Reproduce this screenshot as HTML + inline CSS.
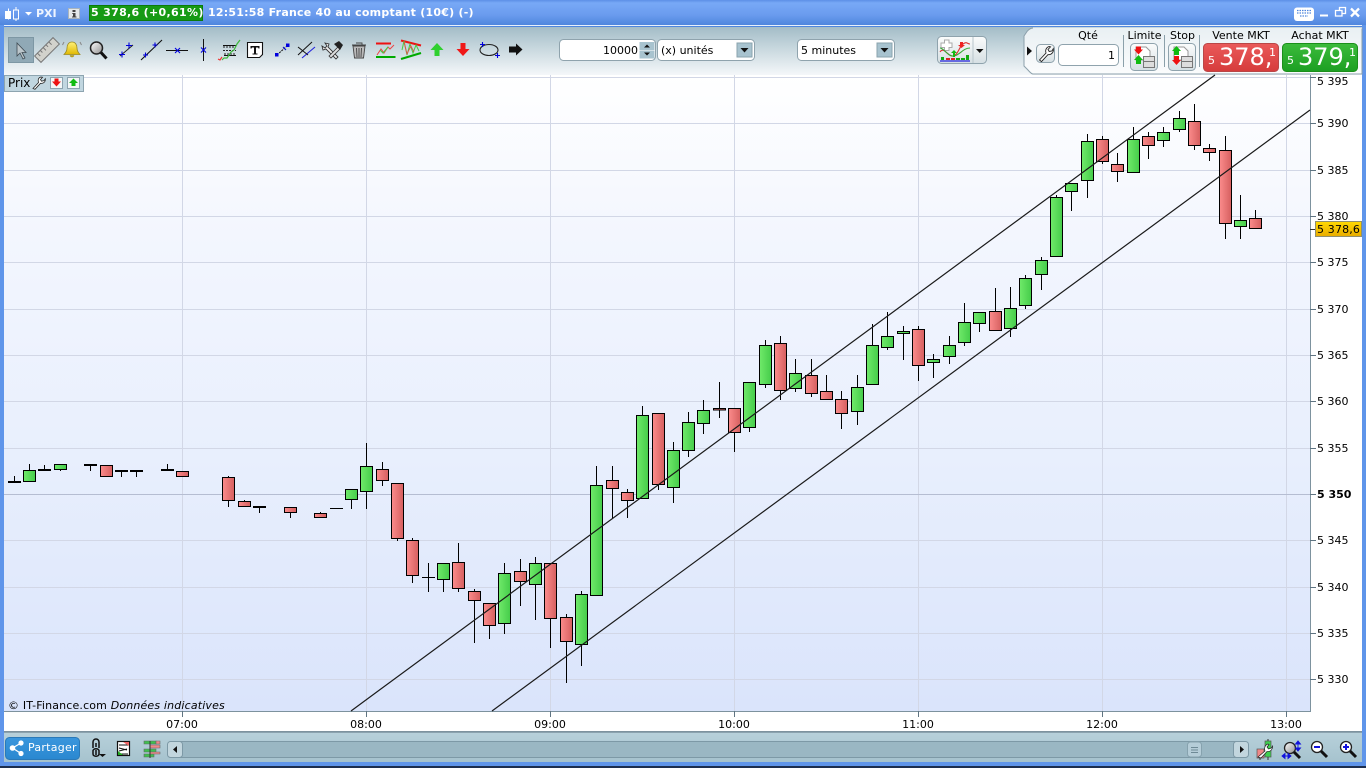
<!DOCTYPE html>
<html><head><meta charset="utf-8"><title>PXI</title>
<style>
html,body{margin:0;padding:0;width:1366px;height:768px;overflow:hidden;background:#5f95ea;font-family:"DejaVu Sans",sans-serif;font-size:11px;color:#000}
.a{position:absolute;white-space:nowrap}
#title{left:0;top:0;width:1366px;height:25px;background:linear-gradient(#5c8fe6,#78a9f6 12%,#6a9bee 60%,#4f86dd)}
#tbar{left:4px;top:27px;width:1358px;height:48px;background:linear-gradient(#a3bcc7,#c4d5dc 40%,#f4f7f9)}
#chartbg{left:4px;top:75px;width:1358px;height:657px;background:#fff}
#plot{left:4px;top:75px;width:1306px;height:636px;background:linear-gradient(#fff,#f3f6fe 25%,#e8effd 60%,#dae4fb)}
#bbar{left:4px;top:732px;width:1358px;height:30px;background:linear-gradient(#b7d0da,#a6c3ce);border-top:1px solid #8ba2ae;box-sizing:border-box}
#line{left:0;top:766px;width:1366px;height:2px;background:#1d2f4f}
.ax{left:1317px;color:#000;line-height:14px}
.tm{top:718px;width:40px;text-align:center;line-height:14px}
.lab{line-height:14px;text-align:center}
.px{color:#fff;line-height:28px}
</style></head><body>
<div class="a" id="title"></div>
<div class="a" style="left:0;top:25px;width:1366px;height:1px;background:#e8f0fc"></div>
<div class="a" style="left:0;top:26px;width:1366px;height:1px;background:#4f86dd"></div>
<div class="a" style="left:0;top:25px;width:4px;height:743px;background:#5f95ea"></div>
<div class="a" style="left:1362px;top:25px;width:4px;height:743px;background:#5f95ea"></div>
<div class="a" id="tbar"></div>
<div class="a" id="chartbg"></div>
<div class="a" id="plot"></div>
<div class="a" id="bbar"></div>
<div class="a" style="left:0;top:762px;width:1366px;height:4px;background:#5f95ea"></div>
<div class="a" id="line"></div>

<div class="a" style="left:36px;top:6px;color:#eef4ff;line-height:15px;font-size:11px;font-weight:bold">PXI</div>
<div class="a" style="left:89px;top:5px;width:114px;height:16px;background:#159a14;border:1px solid #0b7a0b;box-sizing:border-box"></div>
<div class="a" style="left:91px;top:5px;color:#fff;line-height:16px;font-weight:bold;font-size:11px;letter-spacing:.32px">5 378,6 (+0,61%)</div>
<div class="a" style="left:208px;top:5px;color:#fff;line-height:16px;font-weight:bold;font-size:11px;letter-spacing:.23px">12:51:58 France 40 au comptant (10€) (-)</div>

<svg class="a" style="left:0;top:0" width="1366" height="768" viewBox="0 0 1366 768" xmlns="http://www.w3.org/2000/svg">
<defs>
<linearGradient id="g"><stop offset="0" stop-color="#70ea6a"/><stop offset="1" stop-color="#45cc4a"/></linearGradient>
<linearGradient id="r"><stop offset="0" stop-color="#fb8c8c"/><stop offset="1" stop-color="#d65f5f"/></linearGradient>
<linearGradient id="bell" x2="0" y2="1"><stop offset="0" stop-color="#fff27a"/><stop offset="1" stop-color="#e0b800"/></linearGradient>
<linearGradient id="tag" x2="0" y2="1"><stop offset="0" stop-color="#ffd900"/><stop offset="1" stop-color="#e9ac00"/></linearGradient>
<linearGradient id="lens" x1="0" y1="0" x2="1" y2="1"><stop offset="0" stop-color="#fff"/><stop offset="1" stop-color="#8f8f8f"/></linearGradient>
<linearGradient id="btn" x2="0" y2="1"><stop offset="0" stop-color="#fbfcfc"/><stop offset="1" stop-color="#d5dfe3"/></linearGradient>
<linearGradient id="ven" x2="0" y2="1"><stop offset="0" stop-color="#ea5a5a"/><stop offset="1" stop-color="#d63c3c"/></linearGradient>
<linearGradient id="ach" x2="0" y2="1"><stop offset="0" stop-color="#3cbb3c"/><stop offset="1" stop-color="#1c9f22"/></linearGradient>
<linearGradient id="pan" x2="0" y2="1"><stop offset="0" stop-color="#e9f0f3"/><stop offset="1" stop-color="#fbfcfd"/></linearGradient>
<linearGradient id="share" x2="0" y2="1"><stop offset="0" stop-color="#3a96dd"/><stop offset="1" stop-color="#2a88d0"/></linearGradient>
</defs>

<!-- grid -->
<path d="M4 77.5H1310M4 123.5H1310M4 170.5H1310M4 216.5H1310M4 262.5H1310M4 309.5H1310M4 355.5H1310M4 401.5H1310M4 448.5H1310M4 540.5H1310M4 587.5H1310M4 633.5H1310M4 679.5H1310M182.5 75V711M366.5 75V711M550.5 75V711M734.5 75V711M918.5 75V711M1102.5 75V711M1286.5 75V711" stroke="#d2d7e6" fill="none"/>
<path d="M4 494.5H1310" stroke="#b5bdd2" fill="none"/>
<path d="M1310.5 75V712M4 711.5H1311M4 731.5H1362" stroke="#7d929e" fill="none"/>
<path d="M1310 77.5h6M1310 123.5h6M1310 170.5h6M1310 216.5h6M1310 262.5h6M1310 309.5h6M1310 355.5h6M1310 401.5h6M1310 448.5h6M1310 494.5h6M1310 540.5h6M1310 587.5h6M1310 633.5h6M1310 679.5h6M182.5 711v6M366.5 711v6M550.5 711v6M734.5 711v6M918.5 711v6M1102.5 711v6M1286.5 711v6" stroke="#5f7482" fill="none"/>

<!-- wicks -->
<path stroke="#000" fill="none" d="M14.5 476V482M29.5 464V470M44.5 465V470M60.5 469V471M90.5 465V471M121.5 471V477M136.5 471V477M167.5 464V470M228.5 476V507M244.5 500V502M259.5 506V513M290.5 512V518M320.5 512V514M351.5 499V509M366.5 443V509M382.5 462V486M397.5 538V541M412.5 538V583M428.5 563V592M443.5 579V592M458.5 543V592M474.5 589V643M489.5 625V639M504.5 563V634M520.5 559V606M535.5 557V620M550.5 618V648M566.5 614V683M581.5 591V666M596.5 466V486M612.5 466V518M627.5 489V518M642.5 406V416M658.5 484V490M673.5 442V503M688.5 412V457M703.5 400V434M719.5 382V418M734.5 432V452M749.5 427V432M765.5 340V388M780.5 336V400M795.5 359V392M811.5 359V397M826.5 375V392M841.5 391V429M857.5 375V425M872.5 324V346M887.5 312V350M903.5 326V360M918.5 326V381M933.5 354V378M949.5 336V364M964.5 303V346M979.5 323V332M995.5 288V312M1010.5 287V337M1025.5 275V309M1041.5 257V290M1056.5 195V198M1071.5 191V211M1087.5 134V198M1102.5 136V164M1117.5 153V182M1133.5 127V140M1148.5 132V159M1163.5 127V147M1179.5 111V132M1194.5 104V150M1209.5 144V161M1225.5 136V239M1240.5 195V239M1255.5 210V219"/>
<!-- dojis -->
<path stroke="#000" stroke-width="2" fill="none" d="M8 482H21M38 470H51M84 465H97M115 471H128M130 471H143M161 470H174M253 507H266"/>
<path stroke="#000" fill="none" d="M330 508.500H343M422 577.500H435"/>
<!-- red -->
<g fill="url(#r)" stroke="#000">
<rect x="100.500" y="465.500" width="12" height="11"/><rect x="176.500" y="471.500" width="12" height="5"/><rect x="222.500" y="477.500" width="12" height="23"/><rect x="238.500" y="501.500" width="12" height="5"/><rect x="284.500" y="507.500" width="12" height="5"/><rect x="314.500" y="513.500" width="12" height="4"/><rect x="376.500" y="469.500" width="12" height="11"/><rect x="391.500" y="483.500" width="12" height="55"/><rect x="406.500" y="540.500" width="12" height="35"/><rect x="452.500" y="562.500" width="12" height="26"/><rect x="468.500" y="591.500" width="12" height="9"/><rect x="483.500" y="603.500" width="12" height="22"/><rect x="514.500" y="571.500" width="12" height="10"/><rect x="544.500" y="563.500" width="12" height="55"/><rect x="560.500" y="617.500" width="12" height="24"/><rect x="606.500" y="480.500" width="12" height="8"/><rect x="621.500" y="492.500" width="12" height="8"/><rect x="652.500" y="413.500" width="12" height="71"/><rect x="713.500" y="408.500" width="12" height="1.500"/><rect x="728.500" y="408.500" width="12" height="24"/><rect x="774.500" y="343.500" width="12" height="47"/><rect x="805.500" y="375.500" width="12" height="18"/><rect x="820.500" y="391.500" width="12" height="8"/><rect x="835.500" y="399.500" width="12" height="14"/><rect x="912.500" y="329.500" width="12" height="36"/><rect x="989.500" y="311.500" width="12" height="19"/><rect x="1096.500" y="139.500" width="12" height="22"/><rect x="1111.500" y="164.500" width="12" height="7"/><rect x="1142.500" y="136.500" width="12" height="9"/><rect x="1188.500" y="121.500" width="12" height="24"/><rect x="1203.500" y="148.500" width="12" height="4"/><rect x="1219.500" y="150.500" width="12" height="73"/><rect x="1249.500" y="218.500" width="12" height="10"/>
</g>
<!-- green -->
<g fill="url(#g)" stroke="#000">
<rect x="23.500" y="470.500" width="12" height="11"/><rect x="54.500" y="464.500" width="12" height="5"/><rect x="345.500" y="489.500" width="12" height="10"/><rect x="360.500" y="466.500" width="12" height="25"/><rect x="437.500" y="563.500" width="12" height="16"/><rect x="498.500" y="573.500" width="12" height="50"/><rect x="529.500" y="563.500" width="12" height="21"/><rect x="575.500" y="594.500" width="12" height="50"/><rect x="590.500" y="485.500" width="12" height="110"/><rect x="636.500" y="415.500" width="12" height="83"/><rect x="667.500" y="450.500" width="12" height="37"/><rect x="682.500" y="422.500" width="12" height="28"/><rect x="697.500" y="410.500" width="12" height="13"/><rect x="743.500" y="382.500" width="12" height="45"/><rect x="759.500" y="345.500" width="12" height="39"/><rect x="789.500" y="373.500" width="12" height="15"/><rect x="851.500" y="387.500" width="12" height="24"/><rect x="866.500" y="345.500" width="12" height="39"/><rect x="881.500" y="336.500" width="12" height="11"/><rect x="897.500" y="331.500" width="12" height="2"/><rect x="927.500" y="359.500" width="12" height="3"/><rect x="943.500" y="345.500" width="12" height="11"/><rect x="958.500" y="322.500" width="12" height="20"/><rect x="973.500" y="312.500" width="12" height="11"/><rect x="1004.500" y="308.500" width="12" height="20"/><rect x="1019.500" y="278.500" width="12" height="27"/><rect x="1035.500" y="260.500" width="12" height="14"/><rect x="1050.500" y="197.500" width="12" height="59"/><rect x="1065.500" y="183.500" width="12" height="8"/><rect x="1081.500" y="141.500" width="12" height="39"/><rect x="1127.500" y="139.500" width="12" height="33"/><rect x="1157.500" y="132.500" width="12" height="8"/><rect x="1173.500" y="118.500" width="12" height="11"/><rect x="1234.500" y="220.500" width="12" height="6"/>
</g>
<!-- trend lines -->
<path d="M351 711L1215 75M492 711L1310 110" stroke="#1a1a1a" stroke-width="1.200" fill="none"/>

<!-- price tag -->
<path d="M1310 229.500h5" stroke="#333"/>
<rect x="1315.500" y="221.500" width="46" height="15" fill="url(#tag)" stroke="#8f8f70"/>

<!-- title bar icons -->
<g fill="#fff"><rect x="8" y="8.500" width="1" height="11"/><rect x="5" y="11" width="6" height="8"/><path d="M16 7v3M16 19v2" stroke="#fff" fill="none"/><rect x="13.500" y="10" width="5" height="9" fill="none" stroke="#fff"/><path d="M25 12h7l-3.500 3.500z"/></g>
<rect x="68.500" y="8.500" width="11" height="10" fill="#e4e8ea" stroke="#a9b4bd"/>
<path d="M72.500 10h3v2h-3zM72 13h3.500v3.500h1v1h-4.500v-1h1v-2.500h-.500z" fill="#444"/>
<rect x="1294" y="7.500" width="20" height="13.500" rx="3" fill="#fff"/>
<path d="M1297 10.500h14M1297 13h14M1300 16h8" stroke="#4f86dd" stroke-width="1.300" stroke-dasharray="1.500 1" fill="none"/>
<path d="M1320 15.500h8" stroke="#fff" stroke-width="2"/>
<path d="M1335.500 10.500h4v-3h6v6h-3M1335.500 10.500h6.500v5.500h-6.500z" fill="none" stroke="#fff" stroke-width="1.300"/>
<path d="M1351 8.500l8 8M1359 8.500l-8 8" stroke="#fff" stroke-width="2.300"/>

<!-- tools -->
<rect x="8.500" y="37.500" width="25" height="25" fill="#90a9b6" stroke="#7d97a4"/>
<path d="M17 43v13l3-3 3 6 2-1-3-5.500h4z" fill="#bcc6cb" stroke="#3e4a52" stroke-width=".8"/>
<!-- ruler -->
<g transform="translate(47 50) rotate(-45)"><rect x="-13" y="-4.500" width="26" height="9" fill="#d2d2cc" stroke="#777"/><path d="M-9-4.500v4M-5-4.500v3M-1-4.500v4M3-4.500v3M7-4.500v4" stroke="#777"/></g>
<!-- bell -->
<path d="M72 42c-3.500 0-5 3-5 6 0 3-1.500 5-3 6.500h16c-1.500-1.500-3-3.500-3-6.500 0-3-1.500-6-5-6z" fill="url(#bell)" stroke="#9a8a20" stroke-width=".8"/><path d="M70 55.500h4c0 2-4 2-4 0z" fill="#c9a300" stroke="#9a8a20" stroke-width=".5"/><path d="M64 42l-1.500 3M80 42l1.500 3" stroke="#888"/>
<!-- magnifier -->
<circle cx="96.500" cy="48" r="6" fill="url(#lens)" stroke="#222" stroke-width="1.500"/><path d="M101 52.500l5.500 6" stroke="#111" stroke-width="3"/>
<!-- lines -->
<path d="M120 56l13-11" stroke="#222"/><path d="M119 54.500h6M122 51.500v6M126 45.500h6M129 42.500v6" stroke="#00d" stroke-width="1.100"/>
<path d="M141 60l21-20" stroke="#111" stroke-width="1.100"/><path d="M143 55h5M145.500 52.500v5M152.500 45h5M155 42.500v5" stroke="#00d" stroke-width="1.100"/>
<path d="M166 50.500h22" stroke="#111"/><path d="M175 48l5 5M180 48l-5 5" stroke="#00d" stroke-width="1.100"/>
<path d="M203.500 39v22" stroke="#111"/><path d="M201 47.500l5 5M206 47.500l-5 5" stroke="#00d" stroke-width="1.100"/>
<!-- fib -->
<path d="M223 47h13M223 50.500h13M224 54h12" stroke="#222" stroke-dasharray="2 1"/><path d="M223 45.500h13M224 55.500h12" stroke="#111"/><path d="M222 60l2-2 3 0 4-6 3-2 3-6 3-4" fill="none" stroke="#3cb83c" stroke-width="1.200"/><path d="M218 59l2 1 2-3" fill="none" stroke="#e33" stroke-width="1.200"/>
<!-- T -->
<path d="M247.500 42.500h15v12l-3 3h-12z" fill="#fff" stroke="#111" stroke-width="1.100"/><path d="M250.500 46h9v2.500h-1l-.5-1h-2v6h1.500v1h-5v-1h1.500v-6h-2l-.5 1h-1z" fill="#111"/>
<!-- blue seg -->
<path d="M277 55l11-10" stroke="#111" stroke-dasharray="2 1"/><rect x="275" y="53" width="3.500" height="3.500" fill="#00d"/><rect x="286" y="43.500" width="3.500" height="3.500" fill="#00d"/>
<path d="M283 47l3 3" stroke="#00d"/>
<path d="M298 55l14-13" stroke="#111"/><path d="M302 58l13-11" stroke="#22d" stroke-width="1.100"/><path d="M298 47l10 8" stroke="#111"/>
<!-- tools wrench hammer -->
<path d="M325 43l4 1-1 3 10 10-2 2-10-10-3 1-1-4 3 2 2-2z" fill="#eee" stroke="#333" stroke-width=".9"/><path d="M329 56l9-9 2 2-9 9z" fill="#ddd" stroke="#333" stroke-width=".8"/><path d="M334 44l5-3 4 4-3 5z" fill="#222"/>
<!-- trash -->
<path d="M353 46h12l-1.500 12h-9z" fill="#b9b9b9" stroke="#444" stroke-width=".9"/><path d="M352 45h14M356 43h6v2M356.500 48l.5 9M359 48v9M361.500 48l-.5 9" stroke="#444" fill="none" stroke-width=".9"/>
<!-- channel -->
<path d="M376 43.500h15" stroke="#e11" stroke-width="2"/><path d="M376 57h19.500" stroke="#0a0" stroke-width="2"/><path d="M377 55l4-6 3 4 4-6 2 2 4-4" stroke="#e44" fill="none"/><path d="M380 50l3 3 5-6" stroke="#4c4" fill="none"/>
<path d="M401 40.500l20 5" stroke="#e11" stroke-width="2"/><path d="M401 59l20-6" stroke="#0a0" stroke-width="2.200"/><path d="M402 50l2-9 3 14 3-11 3 9 3-8 3 6" stroke="#4c4" fill="none"/><path d="M404 42l3 12 4-8 3 6" stroke="#e44" fill="none" stroke-width=".8"/>
<!-- arrows -->
<path d="M437 43l6.500 7h-4v6h-5v-6h-4z" fill="#2fd02f"/>
<path d="M463 56l6.500-7h-4v-6h-5v6h-4z" fill="#f01818"/>
<!-- ellipse -->
<ellipse cx="489" cy="50" rx="9" ry="5.500" fill="none" stroke="#222" stroke-width="1.100"/><path d="M480 44.500h5M482.500 42v5M495 55.500h5M497.500 53v5" stroke="#00d" stroke-width="1.100"/>
<path d="M509 46.500h7v-3l6.500 6-6.500 6v-3h-7z" fill="#111"/>

<!-- quantity -->
<rect x="559.500" y="39.500" width="96" height="21" rx="4" fill="#fff" stroke="#8fa3ad"/>
<rect x="639.500" y="42" width="15" height="8" fill="#a8c3cf"/><rect x="639.500" y="50.500" width="15" height="8" fill="#a8c3cf"/>
<path d="M644 47.500l3-3 3 3zM644 52.500l3 3 3-3z" fill="#111"/>
<rect x="657.500" y="39.500" width="97" height="21" rx="4" fill="#fff" stroke="#8fa3ad"/>
<rect x="737" y="43" width="15" height="14" fill="#a8c3cf" stroke="#8aa3ae"/><path d="M740.500 48h8l-4 4.500z" fill="#111"/>
<rect x="797.500" y="39.500" width="97" height="21" rx="4" fill="#fff" stroke="#8fa3ad"/>
<rect x="877" y="43" width="15" height="14" fill="#a8c3cf" stroke="#8aa3ae"/><path d="M880.500 48h8l-4 4.500z" fill="#111"/>

<!-- indicator button -->
<rect x="937.500" y="36.500" width="49" height="27" rx="4" fill="url(#btn)" stroke="#8fa3ad"/><path d="M973 37v26" stroke="#b8c5cb"/>
<path d="M976 49h7.500l-3.750 4z" fill="#111"/>
<path d="M941 43h3.500v-3h4.500v3h3v4.500h-3v3h-4.500v-3h-3.500z" fill="#fff" stroke="#aaa"/>
<path d="M940 52c4-6 8 5 13 4s6-9 10-12 4 0 7 0" fill="none" stroke="#d33" stroke-width="1.100"/><path d="M940 48c4 0 8 9 14 8s9-8 16-8" fill="none" stroke="#3a3" stroke-width="1.100"/>
<path d="M951 53l3-3 3 3h-2v4h-2v-4z" fill="#1b1"/><path d="M960 42h3v3h2l-3.500 3-3.500-3h2z" fill="#e22"/>
<path d="M941 57h3v3h-3zM956 58h4v2h-4zM961 58h4v2h-4zM966 55h3v5h-3z" fill="#1a1"/><path d="M946 58h4v2h-4zM951 58h4v2h-4z" fill="#d22"/><path d="M940 61h30" stroke="#22d" stroke-width="1.200"/>

<!-- right order panel -->
<path d="M1362 28H1033c-3 0-6 3-7 5l-2 3v30l3 3c2 2 4 5 6 5h329z" fill="url(#pan)" stroke="#8ca0ab"/>
<path d="M1362 28H1033" stroke="#e9f0f3"/>
<path d="M1027 46.500l5 4.500-5 4.500z" fill="#111"/>
<rect x="1036.500" y="44.500" width="18" height="18" rx="4" fill="url(#btn)" stroke="#8fa3ad"/>
<path id="wr" d="M1039.500 60l6.500-7c-1-2.500 0-5.500 3-6.500l1.500.4-2.500 2.600 1.200 2 2.800-.5 1.300-2.400c.7 3.500-1.800 6.500-5.300 6l-6.500 7z" fill="#fff" stroke="#222" stroke-width=".9"/>
<rect x="1058.500" y="44.500" width="60" height="21" rx="4" fill="#fff" stroke="#8fa3ad"/>
<path d="M1123.500 35v32M1164.500 35v32M1199.500 35v32" stroke="#8ba0aa"/>
<rect x="1130.500" y="43.500" width="27" height="27" rx="4" fill="url(#btn)" stroke="#8fa3ad"/>
<rect x="1168.500" y="43.500" width="27" height="27" rx="4" fill="url(#btn)" stroke="#8fa3ad"/>
<path d="M1136 47h10l4 4v9h-14z" fill="#fff" stroke="#999"/><path d="M1174 47h10l4 4v9h-14z" fill="#fff" stroke="#999"/>
<rect x="1143.500" y="56.500" width="11" height="11" fill="#ddd" stroke="#777"/><path d="M1143.500 61.500h11" stroke="#777"/>
<rect x="1181.500" y="56.500" width="11" height="11" fill="#ddd" stroke="#777"/><path d="M1181.500 61.500h11" stroke="#777"/>
<path d="M1136 46.500h5v3h2l-4.500 5-4.500-5h2z" fill="#e11"/><path d="M1138.500 55l4.500 5h-2v4h-5v-4h-2z" fill="#1b1"/>
<path d="M1176.500 46l4.500 5h-2v4h-5v-4h-2z" fill="#1b1"/><path d="M1174 56h5v4h2l-4.500 5-4.500-5h2z" fill="#e11"/>
<rect x="1203.500" y="43.500" width="75" height="28" rx="4" fill="url(#ven)" stroke="#b94747"/>
<rect x="1282.500" y="43.500" width="75" height="28" rx="4" fill="url(#ach)" stroke="#1a8f1a"/>

<!-- prix tab -->
<rect x="4.500" y="75.500" width="79" height="16" fill="#c1d6e0" stroke="#8da4b0"/>
<path d="M33 88.500l5.500-6c-1-2.500 0-5 2.500-5.500l1.500.3-2 2.200 1 1.700 2.500-.5 1.300-1.900c.3 3-1.800 5-4.800 4.500l-5.500 6z" fill="#fff" stroke="#222" stroke-width=".8"/>
<rect x="50.500" y="77.500" width="12" height="11" fill="#f3f6f7" stroke="#8da4b0"/><path d="M54.500 78.500h4v3h2.500l-4.500 5-4.500-5h2.500z" fill="#e11"/>
<rect x="67.500" y="77.500" width="12" height="11" fill="#f3f6f7" stroke="#8da4b0"/><path d="M73.500 78.500l4.500 4.500h-2.500v3h-4v-3h-2.500z" fill="#1b1"/>

<!-- bottom bar -->
<rect x="5.500" y="737.500" width="74" height="22" rx="4" fill="url(#share)" stroke="#2a79b8"/>
<circle cx="12.500" cy="748" r="2.800" fill="#fff"/><circle cx="21" cy="743" r="2.600" fill="#fff"/><circle cx="21" cy="753.500" r="2.600" fill="#fff"/><path d="M12.500 748l8.500-5M12.500 748l8.500 5.500" stroke="#fff" stroke-width="1.200"/>
<path d="M93 748v-6a2.500 2.500 0 0 1 6 0v6M96 743v4M93 751c0-3 6-3 6 0v3c0 3-6 3-6 0zM96 750v5" fill="none" stroke="#111" stroke-width="1.500"/><path d="M99 754h7l-3.500 3z" fill="#111"/>
<rect x="117.500" y="741.500" width="12" height="14" fill="#fff" stroke="#111" stroke-width="1.200"/><path d="M119 745h9M119 748l8 2M119 751l8-2M119 754h9" stroke="#111"/><path d="M123 742h6v4z" fill="#e66"/><path d="M118 755v-4l5 4z" fill="#2a2"/>
<path d="M144 741h12v3h-12zM144 749h12v3h-12zM144 754h10v3h-10z" fill="#3fbf4f" stroke="#666" stroke-width=".6"/><path d="M150 745h10v3h-10zM150 752h10v2h-10zM156 741h4v3h-4z" fill="#e88" stroke="#666" stroke-width=".6"/><path d="M150 741v17" stroke="#333"/>
<rect x="167.500" y="741.500" width="1080" height="16" rx="4" fill="#9ab7c3" stroke="#7d99a6"/>
<rect x="167.500" y="741.500" width="15" height="16" rx="3" fill="#c2d6de" stroke="#7d99a6"/><path d="M177 746v7l-4-3.500z" fill="#111"/>
<rect x="1187.500" y="742" width="14" height="15" rx="3" fill="#b5cdd8" stroke="#86a2ae"/><path d="M1191 747.500h7M1191 750h7M1191 752.500h7" stroke="#6e8a96"/>
<rect x="1233.500" y="741.500" width="15" height="16" rx="3" fill="#c2d6de" stroke="#7d99a6"/><path d="M1240 746v7l4-3.500z" fill="#111"/>
<rect x="1257" y="749" width="7" height="9" fill="#e88" stroke="#555" stroke-width=".7"/><rect x="1265" y="741" width="6" height="16" fill="#3fcf4f" stroke="#555" stroke-width=".7"/><path d="M1260 760v-2M1268 741v-2M1268 757v3" stroke="#333"/>
<path d="M1258 757l7-6c-1-3 0-6 3-7l1 .5-2 2.500 1.500 2 3-1 1-2c.5 3-2 6-5.500 5.500l-6 6.500z" fill="#fff" stroke="#222" stroke-width=".7"/>
<circle cx="1290" cy="748" r="5.500" fill="url(#lens)" stroke="#222" stroke-width="1.300"/><path d="M1294 752l6 6" stroke="#111" stroke-width="3"/>
<path d="M1298 741v10M1295.500 744l2.500-3 2.500 3zM1295.500 748l2.500 3 2.500-3zM1282 756h9M1285 753.500l-3 2.500 3 2.500zM1288 753.500l3 2.500-3 2.500z" fill="#11d" stroke="#11d" stroke-width=".9"/>
<circle cx="1317" cy="747" r="5.500" fill="#fff" stroke="#222" stroke-width="1.300"/><path d="M1314 747h6" stroke="#11d" stroke-width="2"/><path d="M1321 751l6 6" stroke="#111" stroke-width="3"/>
<circle cx="1346" cy="747" r="5.500" fill="#fff" stroke="#222" stroke-width="1.300"/><path d="M1343 747h6M1346 744v6" stroke="#11d" stroke-width="2"/><path d="M1350 751l6 6" stroke="#111" stroke-width="3"/>
</svg>

<div class="a" style="left:8px;top:76px;line-height:14px;font-size:12px">Prix</div>
<div class="a" style="left:560px;top:44px;width:78px;text-align:right;line-height:14px">10000</div>
<div class="a" style="left:661px;top:44px;line-height:14px">(x) unités</div>
<div class="a" style="left:801px;top:44px;line-height:14px">5 minutes</div>
<div class="a lab" style="left:1058px;top:29px;width:60px">Qté</div>
<div class="a" style="left:1059px;top:49px;width:56px;text-align:right;line-height:14px">1</div>
<div class="a lab" style="left:1124px;top:29px;width:41px">Limite</div>
<div class="a lab" style="left:1165px;top:29px;width:35px">Stop</div>
<div class="a lab" style="left:1203px;top:29px;width:76px">Vente MKT</div>
<div class="a lab" style="left:1282px;top:29px;width:76px">Achat MKT</div>
<div class="a px" style="left:1208px;top:47px;font-size:11px">5</div>
<div class="a px" style="left:1219px;top:43px;font-size:24px">378,</div>
<div class="a px" style="left:1269px;top:39px;font-size:11px">1</div>
<div class="a px" style="left:1287px;top:47px;font-size:11px">5</div>
<div class="a px" style="left:1298px;top:43px;font-size:24px">379,</div>
<div class="a px" style="left:1349px;top:39px;font-size:11px">1</div>

<div class="a ax" style="top:75px">5 395</div>
<div class="a ax" style="top:117px">5 390</div>
<div class="a ax" style="top:164px">5 385</div>
<div class="a ax" style="top:210px">5 380</div>
<div class="a ax" style="top:256px">5 375</div>
<div class="a ax" style="top:303px">5 370</div>
<div class="a ax" style="top:349px">5 365</div>
<div class="a ax" style="top:395px">5 360</div>
<div class="a ax" style="top:442px">5 355</div>
<div class="a ax" style="top:488px;font-weight:bold">5 350</div>
<div class="a ax" style="top:534px">5 345</div>
<div class="a ax" style="top:581px">5 340</div>
<div class="a ax" style="top:627px">5 335</div>
<div class="a ax" style="top:673px">5 330</div>
<div class="a ax" style="top:223px;letter-spacing:.15px">5 378,6</div>

<div class="a tm" style="left:162px">07:00</div>
<div class="a tm" style="left:346px">08:00</div>
<div class="a tm" style="left:530px">09:00</div>
<div class="a tm" style="left:714px">10:00</div>
<div class="a tm" style="left:898px">11:00</div>
<div class="a tm" style="left:1082px">12:00</div>
<div class="a tm" style="left:1266px">13:00</div>

<div class="a" style="left:8px;top:699px;line-height:14px;letter-spacing:.16px">© IT-Finance.com <i>Données indicatives</i></div>
<div class="a" style="left:28px;top:741px;color:#fff;line-height:14px;letter-spacing:.25px">Partager</div>
</body></html>
